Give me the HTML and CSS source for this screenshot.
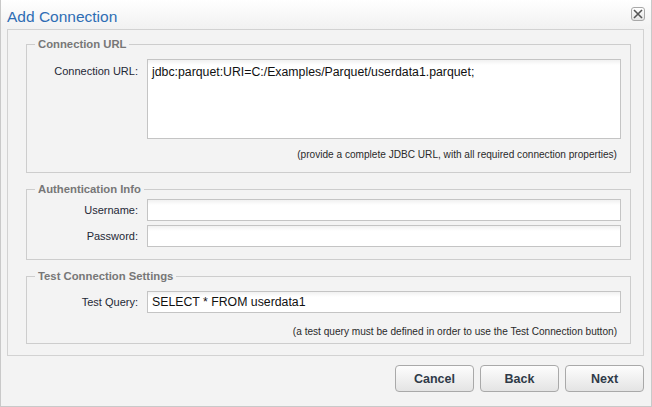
FILE: index.html
```html
<!DOCTYPE html>
<html>
<head>
	<title>Add Connection</title>
	<link rel="stylesheet" href="styles.css">
</head>
<body>
	<div class="dialog">
		<!-- title bar -->
		<div class="titlebar">
			<span class="title">Add Connection</span>
			<span class="close">
				<svg width="10" height="10" viewBox="0 0 10 10"><path d="M1 1L9 9M9 1L1 9" stroke="#555" stroke-width="1.6"/></svg>
			</span>
		</div>
		<!-- the form panel -->
		<div class="panel">
			<fieldset class="url_set">
				<legend>Connection URL</legend>
				<div class="row">
					<label class="top">Connection URL:</label>
					<textarea class="url">jdbc:parquet:URI=C:/Examples/Parquet/userdata1.parquet;</textarea>
				</div>
				<div class="hint">(provide a complete JDBC URL, with all required connection properties)</div>
			</fieldset>
			<fieldset class="auth">
				<legend>Authentication Info</legend>
				<div class="row">
					<label>Username:</label>
					<input type="text">
				</div>
				<div class="row">
					<label>Password:</label>
					<input type="password">
				</div>
			</fieldset>
			<fieldset class="test">
				<legend>Test Connection Settings</legend>
				<div class="row">
					<label>Test Query:</label>
					<input type="text" value="SELECT * FROM userdata1">
				</div>
				<div class="hint">(a test query must be defined in order to use the Test Connection button)</div>
			</fieldset>
		</div>
		<!-- buttons -->
		<div class="buttons">
			<button>Cancel</button>
			<button>Back</button>
			<button>Next</button>
		</div>
	</div>
</body>
</html>
```

FILE: styles.css
```css
body{
	margin: 0;
	font-family: "Liberation Sans", Arial, sans-serif;
	background-color: #f3f3f3;
}
.dialog{
	width: 652px;
	height: 407px;
	box-sizing: border-box;
	border: 1px solid #c9c9c9;
	border-top: none;
	background-color: #f3f3f3;
}
.titlebar{
	height: 29px;
	display: flex;
	justify-content: space-between;
	align-items: flex-start;
	padding: 0 6px 0 6px;
	background: linear-gradient(#ffffff, #f1f1f1);
}
.title{
	font-size: 15.5px;
	color: #2e6db4;
	line-height: 16px;
	padding-top: 9px;
}
.close{
	width: 12px;
	height: 12px;
	margin-top: 7px;
	border: 1px solid #a8a8a8;
	border-radius: 3px;
	background: linear-gradient(#ffffff, #e4e4e4);
	display: flex;
	align-items: center;
	justify-content: center;
}
.panel{
	margin: 0 7px 0 6px;
	border: 1px solid #d2d2d2;
	padding: 7px 12px 11px 18px;
}
fieldset{
	margin: 0;
	border: 1px solid #cdcdcd;
	padding: 8px 9px 11px 0;
}
fieldset + fieldset{
	margin-top: 9px;
}
legend{
	margin-left: 8px;
	padding: 0 3px;
	font-size: 11.3px;
	font-weight: bold;
	color: #777777;
	line-height: 14px;
}
.row{
	display: flex;
	align-items: center;
	margin-bottom: 4px;
}
.row label{
	width: 111px;
	margin-right: 9px;
	text-align: right;
	font-size: 11px;
	color: #1e2836;
}
.row label.top{
	align-self: flex-start;
	padding-top: 6px;
}
input, textarea{
	flex: 1;
	box-sizing: border-box;
	border: 1px solid #c4c4c4;
	background: linear-gradient(#f1f1f1, #ffffff 5px);
	font-family: "Liberation Sans", Arial, sans-serif;
	font-size: 12.3px;
	color: #111111;
	padding: 0 4px;
	margin: 0;
	height: 22px;
	outline: none;
}
textarea{
	height: 80px;
	resize: none;
	padding: 4px 4px;
	line-height: 16px;
}
.hint{
	text-align: right;
	font-size: 10.1px;
	color: #2a2a2a;
	padding: 6px 4px 0 0;
	line-height: 12px;
}
.auth{
	padding-top: 3px;
	padding-bottom: 8px;
}
.test .row{
	margin-bottom: 0;
}
.test .hint{
	padding-top: 13px;
}
.test{
	padding-bottom: 5px;
}
.buttons{
	display: flex;
	justify-content: flex-end;
	gap: 6px;
	padding: 9px 7px 0 0;
}
button{
	width: 79px;
	height: 27px;
	border: 1px solid #a9a9a9;
	border-radius: 4px;
	background: linear-gradient(#fdfdfd, #e4e4e4);
	font-family: "Liberation Sans", Arial, sans-serif;
	font-size: 12.5px;
	font-weight: bold;
	color: #2f3a48;
}
```
